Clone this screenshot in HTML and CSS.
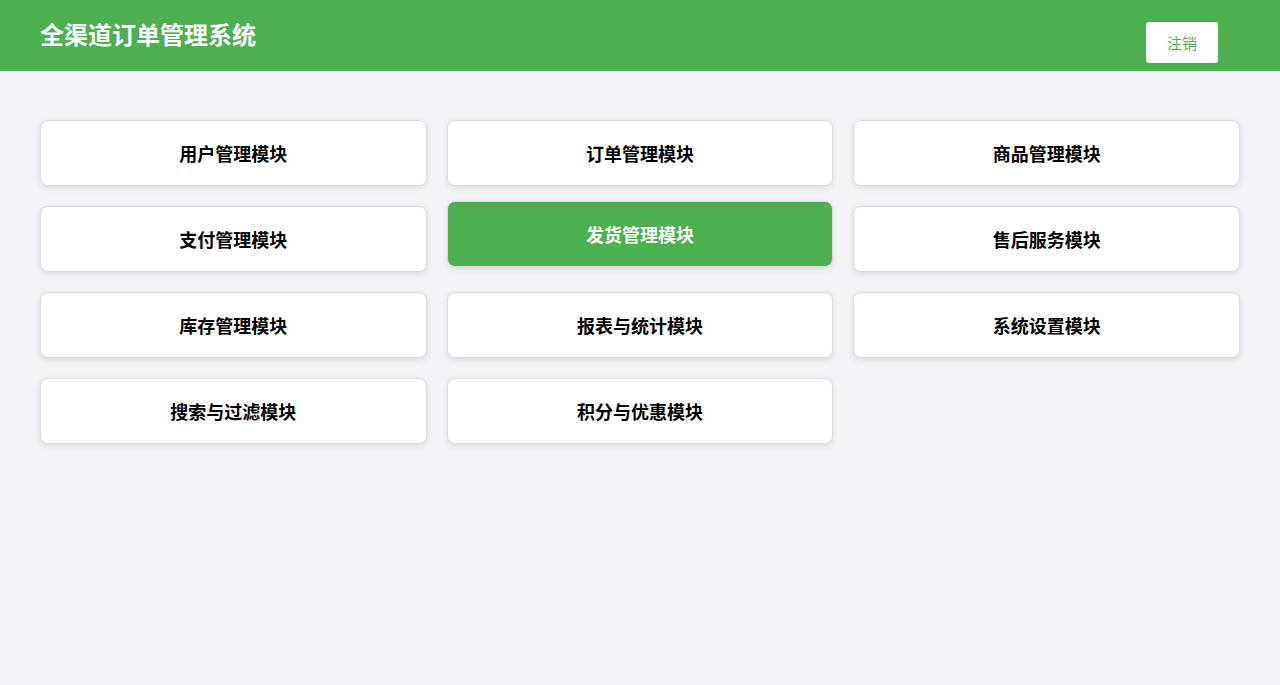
FILE: index.html
```html
<!DOCTYPE html>
<html lang="zh-CN">
<head>
    <meta charset="UTF-8">
    <meta name="viewport" content="width=device-width, initial-scale=1.0">
    <title>全渠道订单管理系统</title>
    <link rel="stylesheet" href="styles.css">
</head>
<body>
    <header class="header">
        <h1 class="title">全渠道订单管理系统</h1>
        <button class="logout">注销</button>
    </header>
    <main class="modules">
        <div class="module">用户管理模块</div>
        <div class="module">订单管理模块</div>
        <div class="module">商品管理模块</div>
        <div class="module">支付管理模块</div>
        <div class="module active">发货管理模块</div>
        <div class="module">售后服务模块</div>
        <div class="module">库存管理模块</div>
        <div class="module">报表与统计模块</div>
        <div class="module">系统设置模块</div>
        <div class="module">搜索与过滤模块</div>
        <div class="module">积分与优惠模块</div>
    </main>
</body>
</html>
```

FILE: styles.css
```css
body {
    margin: 0;
    font-family: "Noto Sans CJK SC", "Noto Sans", sans-serif;
    background-color: #f3f3f8;
    color: #000;
}
.header {
    height: 71px;
    background-color: #4caf50;
    display: flex;
    align-items: center;
    justify-content: space-between;
    padding: 0 62px 0 40px;
    box-sizing: border-box;
}
.title {
    margin: 0;
    color: #fff;
    font-size: 24px;
    font-weight: 700;
    margin-top: -4px;
}
.logout {
    background: #fff;
    color: #4caf50;
    border: none;
    border-radius: 3px;
    width: 72px;
    height: 41px;
    font-family: inherit;
    font-size: 15px;
    margin-top: 14px;
    cursor: pointer;
}
.modules {
    display: grid;
    grid-template-columns: repeat(3, 1fr);
    gap: 20px;
    padding: 49px 40px;
}
.module {
    background: #fff;
    border: 1px solid #dcdcdc;
    border-radius: 8px;
    box-shadow: 0 2px 6px rgba(0, 0, 0, 0.1);
    padding: 20px;
    text-align: center;
    font-size: 18px;
    font-weight: 700;
    line-height: 24px;
    cursor: pointer;
}
.module.active {
    background: #4caf50;
    color: #fff;
    transform: translateY(-5px);
}
```
